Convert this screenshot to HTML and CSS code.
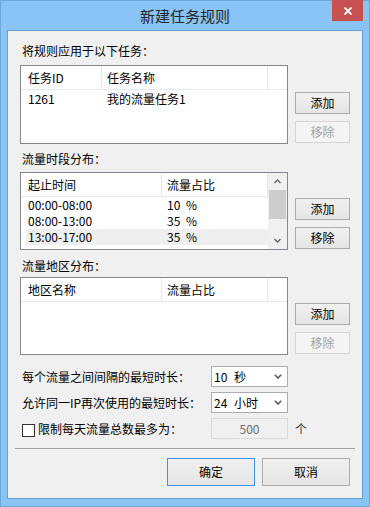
FILE: index.html
```html
<!DOCTYPE html>
<html lang="zh-CN">
<head>
<meta charset="utf-8">
<title>新建任务规则</title>
<link rel="stylesheet" href="styles.css">
</head>
<body>
<div class="window">
  <div class="titlebar">
    <span class="title">新建任务规则</span>
    <button class="close" aria-label="关闭">
      <svg width="8" height="8" viewBox="0 0 8 8"><path d="M0.5 0.5 L7.5 7.5 M7.5 0.5 L0.5 7.5" stroke="#fff" stroke-width="1.9" fill="none"/></svg>
    </button>
  </div>
  <div class="client">
    <div class="group-label">将规则应用于以下任务：</div>
    <div class="group-body gb1">
      <div class="list list-tasks">
        <div class="list-main">
          <div class="list-head">
            <div class="hcol w-id">任务ID</div>
            <div class="hcol w-name">任务名称</div>
            <div class="hcol fill"></div>
          </div>
          <div class="row r-tasks"><span class="cell">1261</span><span class="cell">我的流量任务1</span></div>
        </div>
      </div>
      <div class="side-buttons">
        <button class="btn">添加</button>
        <button class="btn" disabled>移除</button>
      </div>
    </div>

    <div class="group-label gl2">流量时段分布：</div>
    <div class="group-body gb2">
      <div class="list list-time">
        <div class="list-main">
          <div class="list-head">
            <div class="hcol w-a">起止时间</div>
            <div class="hcol w-b">流量占比</div>
          </div>
          <div class="row r-wide"><span class="cell">00:00-08:00</span><span class="cell">10 %</span></div>
          <div class="row r-wide"><span class="cell">08:00-13:00</span><span class="cell">35 %</span></div>
          <div class="row r-wide hot"><span class="cell">13:00-17:00</span><span class="cell">35 %</span></div>
        </div>
        <div class="scrollbar">
          <div class="sb-btn"><svg width="7" height="5" viewBox="0 0 7 5"><path d="M0.5 4 L3.5 1 L6.5 4" stroke="#606060" stroke-width="1.3" fill="none"/></svg></div>
          <div class="sb-thumb"></div>
          <div class="sb-track"></div>
          <div class="sb-btn"><svg width="7" height="5" viewBox="0 0 7 5"><path d="M0.5 1 L3.5 4 L6.5 1" stroke="#606060" stroke-width="1.3" fill="none"/></svg></div>
        </div>
      </div>
      <div class="side-buttons">
        <button class="btn">添加</button>
        <button class="btn">移除</button>
      </div>
    </div>

    <div class="group-label gl3">流量地区分布：</div>
    <div class="group-body gb3">
      <div class="list list-region">
        <div class="list-main">
          <div class="list-head">
            <div class="hcol w-a">地区名称</div>
            <div class="hcol w-b">流量占比</div>
            <div class="hcol fill"></div>
          </div>
        </div>
      </div>
      <div class="side-buttons">
        <button class="btn">添加</button>
        <button class="btn" disabled>移除</button>
      </div>
    </div>

    <div class="fields">
      <div class="field-row">
        <span class="field-label">每个流量之间间隔的最短时长：</span>
        <div class="select"><span>10 秒</span><svg width="8" height="5" viewBox="0 0 8 5"><path d="M0.8 0.8 L4 4 L7.2 0.8" stroke="#5a5a5a" stroke-width="1.6" fill="none"/></svg></div>
      </div>
      <div class="field-row">
        <span class="field-label">允许同一IP再次使用的最短时长：</span>
        <div class="select"><span>24 小时</span><svg width="8" height="5" viewBox="0 0 8 5"><path d="M0.8 0.8 L4 4 L7.2 0.8" stroke="#5a5a5a" stroke-width="1.6" fill="none"/></svg></div>
      </div>
      <div class="field-row">
        <span class="field-label check-label"><span class="checkbox"></span>限制每天流量总数最多为：</span>
        <div class="num-input">500</div>
        <span class="unit">个</span>
      </div>
    </div>

    <div class="separator"></div>

    <div class="footer">
      <button class="btn btn-lg default">确定</button>
      <button class="btn btn-lg">取消</button>
    </div>
  </div>
</div>
</body>
</html>
```

FILE: styles.css
```css
* {
  box-sizing: border-box;
  margin: 0;
  padding: 0;
}

html, body {
  width: 370px;
  height: 507px;
  overflow: hidden;
}

body {
  font-family: "Noto Sans CJK SC", "Noto Sans", sans-serif;
  font-size: 12px;
  color: #000;
  background: #8ac3f5;
}

.window {
  position: relative;
  width: 370px;
  height: 507px;
  border: 1px solid #6fa6dc;
  background: #8ac3f5;
  display: flex;
  flex-direction: column;
}

.titlebar {
  height: 29px;
  display: flex;
  align-items: center;
  justify-content: center;
}

.title {
  font-size: 15px;
  line-height: 20px;
  color: #262626;
}

.close {
  position: absolute;
  top: -1px;
  right: 6px;
  width: 31px;
  height: 21px;
  border: 0;
  background: #c75050;
  display: flex;
  align-items: center;
  justify-content: center;
}

.client {
  flex: 1;
  margin: 0 6px 7px 6px;
  border: 1px solid #679ed3;
  background: #f0f0f0;
  padding: 12px 12px 0 12px;
  display: flex;
  flex-direction: column;
}

.group-label {
  height: 16px;
  line-height: 16px;
  padding-left: 2px;
}

.gl2 { margin-top: 7px; }
.gl3 { margin-top: 8px; }

.group-body {
  display: flex;
  align-items: flex-end;
  gap: 7px;
}

.gb1 { margin-top: 6px; }
.gb2 { margin-top: 5px; }
.gb3 { margin-top: 3px; }

.list {
  width: 268px;
  border: 1px solid #828790;
  background: #fff;
  display: flex;
}

.list-tasks { height: 79px; }
.list-time, .list-region { height: 78px; }

.list-main {
  flex: 1;
  min-width: 0;
}

.list-head {
  height: 24px;
  display: flex;
  border-bottom: 1px solid #e3eaf3;
}

.hcol {
  line-height: 23px;
  border-right: 1px solid #e3eaf3;
  padding-left: 7px;
  white-space: nowrap;
}

.hcol.w-id { width: 81px; }
.hcol.w-name { width: 166px; padding-left: 5px; }
.hcol.w-a { width: 141px; }
.hcol.w-b { width: 106px; padding-left: 5px; }
.hcol.fill { flex: 1; border-right: 0; padding: 0; }

.row {
  display: grid;
  height: 16px;
  line-height: 16px;
  margin-left: 5px;
  word-spacing: 3px;
}

.r-tasks { grid-template-columns: 76px 1fr; margin-top: 1px; }
.r-wide { grid-template-columns: 136px 1fr; }

.row .cell:first-child { padding-left: 2px; }
.row .cell:last-child { padding-left: 5px; }

.row.hot { background: #efefef; }

.scrollbar {
  width: 19px;
  display: flex;
  flex-direction: column;
  background: #f0f0f0;
}

.sb-btn {
  height: 17px;
  display: flex;
  align-items: center;
  justify-content: center;
}

.sb-thumb {
  height: 29px;
  margin: 0 1px 0 1px;
  background: #cdcdcd;
}

.sb-track { flex: 1; }

.side-buttons {
  display: flex;
  flex-direction: column;
  gap: 7px;
  margin-bottom: 1px;
}

.btn {
  font: inherit;
  color: #000;
  width: 55px;
  height: 22px;
  border: 1px solid #acacac;
  background: linear-gradient(#f0f0f0, #e5e5e5);
  line-height: 18px;
}

.btn:disabled {
  color: #a3a3a3;
  border-color: #d5d5d5;
  background: #f4f4f4;
}

.fields {
  margin-top: 11px;
  display: flex;
  flex-direction: column;
  gap: 5px;
}

.field-row {
  height: 21px;
  display: flex;
  align-items: center;
  padding-left: 2px;
}

.field-label {
  width: 189px;
  white-space: nowrap;
  line-height: 16px;
}

.check-label {
  display: flex;
  align-items: center;
}

.checkbox {
  width: 13px;
  height: 13px;
  border: 1px solid #333;
  background: #fff;
  margin-right: 3px;
  margin-top: 4px;
}

.select {
  width: 77px;
  height: 21px;
  border: 1px solid #acacac;
  background: #fff;
  display: flex;
  align-items: center;
  justify-content: space-between;
  padding: 0 5px 0 2px;
  line-height: 16px;
  word-spacing: 4px;
}

.num-input {
  width: 77px;
  height: 21px;
  border: 1px solid #d9d9d9;
  background: #f0f0f0;
  color: #6d6d6d;
  text-align: center;
  line-height: 19px;
}

.unit {
  margin-left: 7px;
  color: #333;
}

.separator {
  margin: 9px -5px 0 -5px;
  height: 1px;
  background: #a0a0a0;
}

.footer {
  margin-top: 9px;
  display: flex;
  justify-content: flex-end;
  gap: 7px;
}

.btn-lg {
  width: 88px;
  height: 28px;
  line-height: 24px;
}

.btn.default {
  border-color: #3c94e6;
}
```
